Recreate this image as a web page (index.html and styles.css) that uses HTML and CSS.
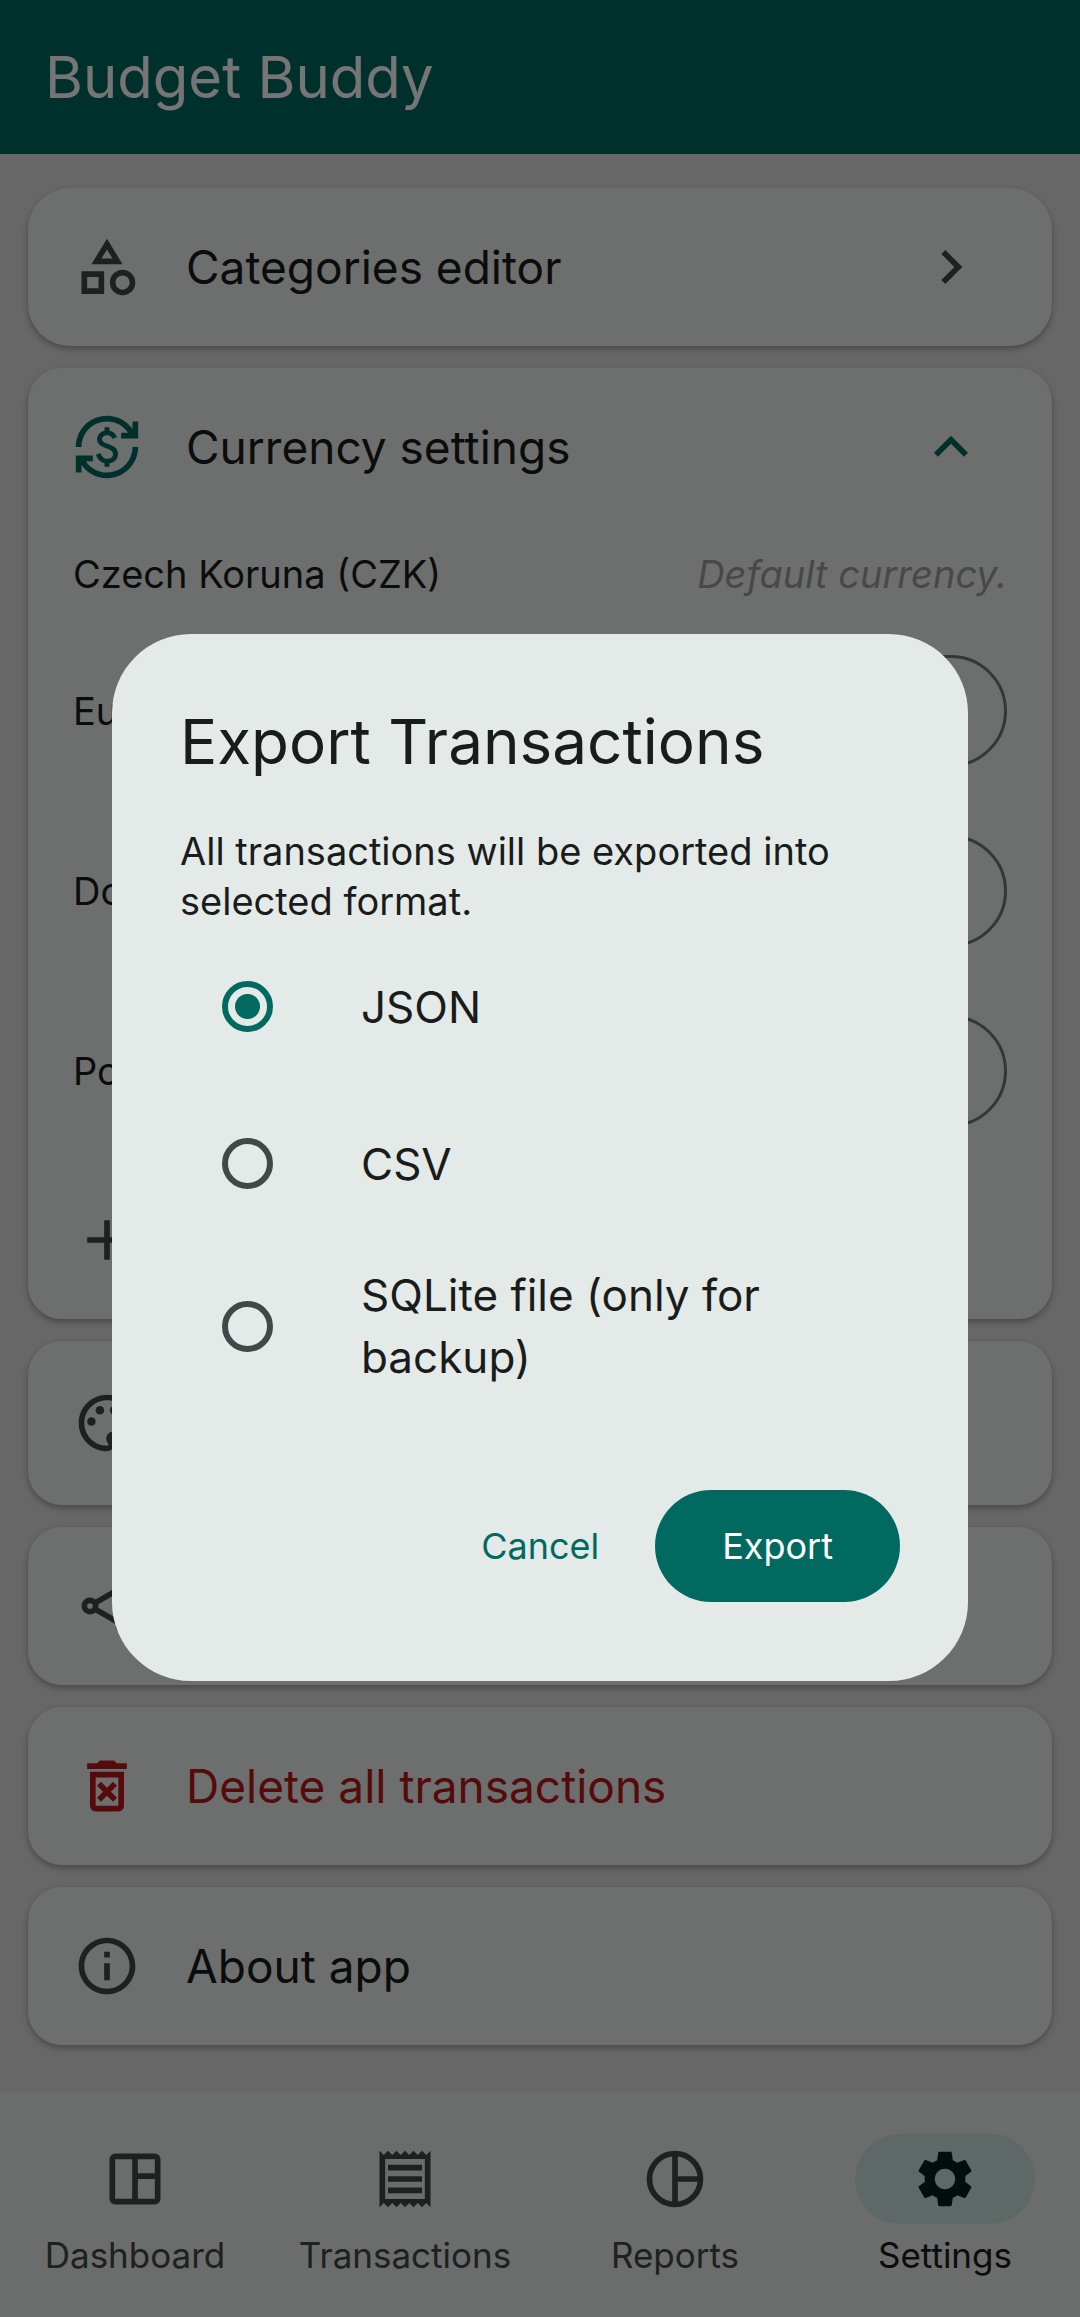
FILE: index.html
```html
<!DOCTYPE html>
<html lang="en">
<head>
<meta charset="utf-8">
<meta name="viewport" content="width=device-width, initial-scale=1">
<title>Budget Buddy</title>
<link rel="stylesheet" href="styles.css">
</head>
<body>
<div class="app">
  <header class="app-bar"><h1 class="app-title">Budget Buddy</h1></header>

  <main class="settings">
    <a class="card card-round row" href="#categories">
      <svg class="icon" viewBox="0 0 24 24" aria-hidden="true"><path d="M12 2l-5.5 9h11L12 2zm0 3.84L13.93 9h-3.87L12 5.84zM17.5 13c-2.49 0-4.5 2.01-4.5 4.5s2.01 4.5 4.5 4.5 4.5-2.01 4.5-4.5-2.01-4.5-4.5-4.5zm0 7c-1.38 0-2.5-1.12-2.5-2.5s1.12-2.5 2.5-2.5 2.5 1.12 2.5 2.5-1.12 2.5-2.5 2.5zM3 21.5h8v-8H3v8zm2-6h4v4H5v-4z"/></svg>
      <span class="row-label">Categories editor</span>
      <svg class="icon" viewBox="0 0 24 24" aria-hidden="true"><path d="M10 6L8.59 7.41 13.17 12l-4.58 4.59L10 18l6-6-6-6z"/></svg>
    </a>

    <section class="card">
      <button class="row" type="button" aria-expanded="true">
        <svg class="icon icon-primary" viewBox="0 0 24 24" aria-hidden="true"><path d="M12.89,11.1c-1.78-0.59-2.64-0.96-2.64-1.9c0-1.02,1.11-1.39,1.81-1.39c1.31,0,1.79,0.99,1.9,1.34l1.58-0.67c-0.15-0.44-0.82-1.91-2.66-2.23V5h-1.75v1.26c-2.6,0.56-2.62,2.85-2.62,2.96c0,2.27,2.25,2.91,3.35,3.31c1.58,0.56,2.28,1.07,2.28,2.03c0,1.13-1.05,1.61-1.98,1.61c-1.82,0-2.34-1.87-2.4-2.09L8.1,14.75c0.63,2.19,2.28,2.78,3.02,2.96V19h1.75v-1.24c0.52-0.09,3.02-0.59,3.02-3.22C15.9,13.15,15.29,11.93,12.89,11.1z M3,21H1v-6h6v2l-2.48,0c1.61,2.41,4.36,4,7.48,4c4.97,0,9-4.03,9-9h2c0,6.08-4.92,11-11,11c-3.72,0-7.01-1.85-9-4.67L3,21z M1,12C1,5.92,5.92,1,12,1c3.72,0,7.01,1.85,9,4.67L21,3h2v6h-6V7l2.48,0C17.87,4.59,15.12,3,12,3c-4.97,0-9,4.03-9,9H1z"/></svg>
        <span class="row-label">Currency settings</span>
        <svg class="icon icon-primary" viewBox="0 0 24 24" aria-hidden="true"><path d="M12 8l-6 6 1.41 1.41L12 10.83l4.59 4.58L18 14z"/></svg>
      </button>
      <div class="currency currency-default">
        <span>Czech Koruna (CZK)</span>
        <em class="hint">Default currency.</em>
      </div>
      <div class="currency">
        <label for="rate-eur">Euro</label>
        <input class="rate" id="rate-eur" type="text">
      </div>
      <div class="currency">
        <label for="rate-usd">Dollar</label>
        <input class="rate" id="rate-usd" type="text">
      </div>
      <div class="currency">
        <label for="rate-gbp">Pound</label>
        <input class="rate" id="rate-gbp" type="text">
      </div>
      <button class="row" type="button" aria-label="Add currency">
        <svg class="icon" viewBox="0 0 24 24" aria-hidden="true"><path d="M19 13h-6v6h-2v-6H5v-2h6V5h2v6h6v2z"/></svg>
      </button>
    </section>

    <button class="card row row-tall" type="button" aria-label="Theme">
      <svg class="icon" viewBox="0 0 24 24" aria-hidden="true"><path d="M12 22C6.49 22 2 17.51 2 12S6.49 2 12 2s10 4.04 10 9c0 3.31-2.69 6-6 6h-1.77c-.28 0-.5.22-.5.5 0 .12.05.23.13.33.41.47.64 1.06.64 1.67A2.5 2.5 0 0 1 12 22zm0-18c-4.41 0-8 3.59-8 8s3.59 8 8 8c.28 0 .5-.22.5-.5a.54.54 0 0 0-.14-.35c-.41-.46-.63-1.05-.63-1.65a2.5 2.5 0 0 1 2.5-2.5H16c2.21 0 4-1.79 4-4 0-3.86-3.59-7-8-7z"/><circle cx="6.5" cy="11.5" r="1.5"/><circle cx="9.5" cy="7.5" r="1.5"/><circle cx="14.5" cy="7.5" r="1.5"/><circle cx="17.5" cy="11.5" r="1.5"/></svg>
    </button>

    <button class="card row" type="button" aria-label="Export">
      <svg class="icon icon-line" viewBox="0 0 24 24" aria-hidden="true"><circle cx="6" cy="12" r="2"/><circle cx="18" cy="5" r="2"/><circle cx="18" cy="19" r="2"/><path d="M7.7 11L16.3 6M7.7 13l8.6 5"/></svg>
    </button>

    <button class="card row row-danger" type="button">
      <svg class="icon" viewBox="0 0 24 24" aria-hidden="true"><path d="M14.12 10.47L12 12.59l-2.13-2.12-1.41 1.41L10.59 14l-2.12 2.12 1.41 1.41L12 15.41l2.12 2.12 1.41-1.41L13.41 14l2.12-2.12zM15.5 4l-1-1h-5l-1 1H5v2h14V4zM6 19c0 1.1.9 2 2 2h8c1.1 0 2-.9 2-2V7H6v12zM8 9h8v10H8V9z"/></svg>
      <span class="row-label">Delete all transactions</span>
    </button>

    <a class="card row" href="#about">
      <svg class="icon" viewBox="0 0 24 24" aria-hidden="true"><path d="M11 7h2v2h-2zm0 4h2v6h-2zm1-9C6.48 2 2 6.48 2 12s4.48 10 10 10 10-4.48 10-10S17.52 2 12 2zm0 18c-4.41 0-8-3.59-8-8s3.59-8 8-8 8 3.59 8 8-3.59 8-8 8z"/></svg>
      <span class="row-label">About app</span>
    </a>
  </main>

  <nav class="nav-bar">
    <a class="nav-item" href="#dashboard">
      <span class="nav-pill"><svg class="icon" viewBox="0 0 24 24" aria-hidden="true"><path fill-rule="evenodd" d="M5 3h14a2 2 0 0 1 2 2v14a2 2 0 0 1-2 2H5a2 2 0 0 1-2-2V5a2 2 0 0 1 2-2zM5 5v14h6V5zM13 5v5h6V5zM13 12v7h6v-7z"/></svg></span>
      <span class="nav-label">Dashboard</span>
    </a>
    <a class="nav-item" href="#transactions">
      <span class="nav-pill"><svg class="icon" viewBox="0 0 24 24" aria-hidden="true"><path d="M19.5 3.5L18 2l-1.5 1.5L15 2l-1.5 1.5L12 2l-1.5 1.5L9 2 7.5 3.5 6 2 4.5 3.5 3 2v20l1.5-1.5L6 22l1.5-1.5L9 22l1.5-1.5L12 22l1.5-1.5L15 22l1.5-1.5L18 22l1.5-1.5L21 22V2l-1.5 1.5zM19 19.09H5V4.91h14v14.18zM6 15h12v2H6zm0-4h12v2H6zm0-4h12v2H6z"/></svg></span>
      <span class="nav-label">Transactions</span>
    </a>
    <a class="nav-item" href="#reports">
      <span class="nav-pill"><svg class="icon icon-line" viewBox="0 0 24 24" aria-hidden="true"><circle cx="12" cy="12" r="9"/><path d="M12 3v18M12 12h9"/></svg></span>
      <span class="nav-label">Reports</span>
    </a>
    <a class="nav-item nav-active" href="#settings" aria-current="page">
      <span class="nav-pill"><svg class="icon" viewBox="0 0 24 24" aria-hidden="true"><path d="M19.14 12.94c.04-.3.06-.61.06-.94 0-.32-.02-.64-.07-.94l2.03-1.58c.18-.14.23-.41.12-.61l-1.92-3.32c-.12-.22-.37-.29-.59-.22l-2.39.96c-.5-.38-1.03-.7-1.62-.94l-.36-2.54c-.04-.24-.24-.41-.48-.41h-3.84c-.24 0-.43.17-.47.41l-.36 2.54c-.59.24-1.13.57-1.62.94l-2.39-.96c-.22-.08-.47 0-.59.22L2.74 8.87c-.12.21-.08.47.12.61l2.03 1.58c-.05.3-.09.63-.09.94s.02.64.07.94l-2.03 1.58c-.18.14-.23.41-.12.61l1.92 3.32c.12.22.37.29.59.22l2.39-.96c.5.38 1.03.7 1.62.94l.36 2.54c.05.24.24.41.48.41h3.84c.24 0 .44-.17.47-.41l.36-2.54c.59-.24 1.13-.56 1.62-.94l2.39.96c.22.08.47 0 .59-.22l1.92-3.32c.12-.22.07-.47-.12-.61l-2.01-1.58zM12 15.6c-1.98 0-3.6-1.62-3.6-3.6s1.62-3.6 3.6-3.6 3.6 1.62 3.6 3.6-1.62 3.6-3.6 3.6z"/></svg></span>
      <span class="nav-label">Settings</span>
    </a>
  </nav>
</div>

<div class="scrim">
  <form class="dialog" role="dialog" aria-modal="true" aria-labelledby="dialog-title">
    <h2 class="dialog-title" id="dialog-title">Export Transactions</h2>
    <p class="dialog-text">All transactions will be exported into selected format.</p>
    <div class="options">
      <label class="option"><input class="radio" type="radio" name="format" value="json" checked><span>JSON</span></label>
      <label class="option"><input class="radio" type="radio" name="format" value="csv"><span>CSV</span></label>
      <label class="option"><input class="radio" type="radio" name="format" value="sqlite"><span>SQLite file (only for backup)</span></label>
    </div>
    <div class="actions">
      <button class="button" type="button">Cancel</button>
      <button class="button button-filled" type="submit">Export</button>
    </div>
  </form>
</div>
</body>
</html>
```
FILE: styles.css
```css
:root {
  --primary: #006a60;
  --on-surface: #191c1b;
  --on-surface-variant: #3f4947;
  --outline: #6f7977;
  --error: #ba1a1a;
  --card: #edf1ef;
}

* {
  box-sizing: border-box;
}

body {
  margin: 0;
  background: #e0e0e0;
  color: var(--on-surface);
  font-family: Inter, "Liberation Sans", sans-serif;
  font-size: 38px;
  line-height: 50px;
}

button,
input {
  font: inherit;
  color: inherit;
}

a {
  color: inherit;
  text-decoration: none;
}

h1,
h2,
p {
  margin: 0;
  font-weight: 400;
}

.app {
  display: flex;
  flex-direction: column;
  min-height: 100vh;
}

.app-bar {
  padding: 36px 45px;
  background: var(--primary);
  color: #fff;
}

.app-title {
  font-size: 58px;
  line-height: 82px;
}

.settings {
  flex: 1;
  display: flex;
  flex-direction: column;
  gap: 22px;
  padding: 34px 28px 40px;
}

.card {
  border: 0;
  border-radius: 34px;
  background: var(--card);
  box-shadow: 0 3px 6px rgba(0, 0, 0, 0.3);
}

.card-round {
  border-radius: 42px;
}

.row {
  display: flex;
  align-items: center;
  gap: 45px;
  width: 100%;
  min-height: 158px;
  padding: 0 67px 0 45px;
  border: 0;
  font-size: 46px;
  line-height: 62px;
  text-align: left;
}

.row:not(.card) {
  background: none;
}

.row-tall {
  min-height: 164px;
}

.row-label {
  flex: 1;
}

.row-danger,
.row-danger .icon {
  color: var(--error);
}

.icon {
  flex: none;
  display: block;
  width: 68px;
  height: 68px;
  color: var(--on-surface-variant);
  fill: currentColor;
}

.icon-primary {
  color: var(--primary);
}

.icon-line {
  fill: none;
  stroke: currentColor;
  stroke-width: 2;
}

.currency {
  display: flex;
  align-items: center;
  justify-content: space-between;
  min-height: 180px;
  padding: 0 45px;
}

.currency-default {
  min-height: 95px;
}

.hint {
  color: #9e9e9e;
}

.rate {
  width: 40%;
  height: 112px;
  padding: 0 45px;
  border: 3px solid var(--outline);
  border-radius: 56px;
  background: none;
}

.nav-bar {
  display: flex;
  padding: 42px 0 39px;
  background: #e9edeb;
}

.nav-item {
  flex: 1;
  display: flex;
  flex-direction: column;
  align-items: center;
  gap: 8px;
  color: var(--on-surface-variant);
  font-size: 35px;
  line-height: 46px;
}

.nav-pill {
  display: flex;
  align-items: center;
  justify-content: center;
  width: 180px;
  height: 90px;
  border-radius: 45px;
}

.nav-active {
  color: var(--on-surface);
}

.nav-active .nav-pill {
  background: #cce4e0;
}

.nav-active .icon {
  color: #05201c;
}

.scrim {
  position: fixed;
  inset: 0;
  display: flex;
  align-items: center;
  padding: 0 112px 2px;
  background: rgba(0, 0, 0, 0.54);
}

.dialog {
  flex: 1;
  padding: 66px 68px 79px;
  border-radius: 79px;
  background: #e4eae8;
}

.dialog-title {
  font-size: 62px;
  line-height: 84px;
}

.dialog-text {
  margin-top: 42px;
  margin-bottom: 2px;
}

.option {
  display: flex;
  align-items: center;
  gap: 88px;
  min-height: 157px;
  padding: 22px 42px;
  font-size: 44px;
  line-height: 62px;
}

.radio {
  flex: none;
  appearance: none;
  width: 51px;
  height: 51px;
  margin: 0;
  border: 6px solid var(--on-surface-variant);
  border-radius: 50%;
}

.radio:checked {
  border-color: var(--primary);
  background: radial-gradient(circle, var(--primary) 12px, transparent 13px);
}

.actions {
  display: flex;
  justify-content: flex-end;
  gap: 22px;
  margin-top: 80px;
}

.button {
  height: 112px;
  padding: 0 34px;
  border: 0;
  border-radius: 56px;
  background: none;
  color: var(--primary);
  font-size: 36px;
}

.button-filled {
  padding: 0 67px;
  background: var(--primary);
  color: #fff;
}
```
